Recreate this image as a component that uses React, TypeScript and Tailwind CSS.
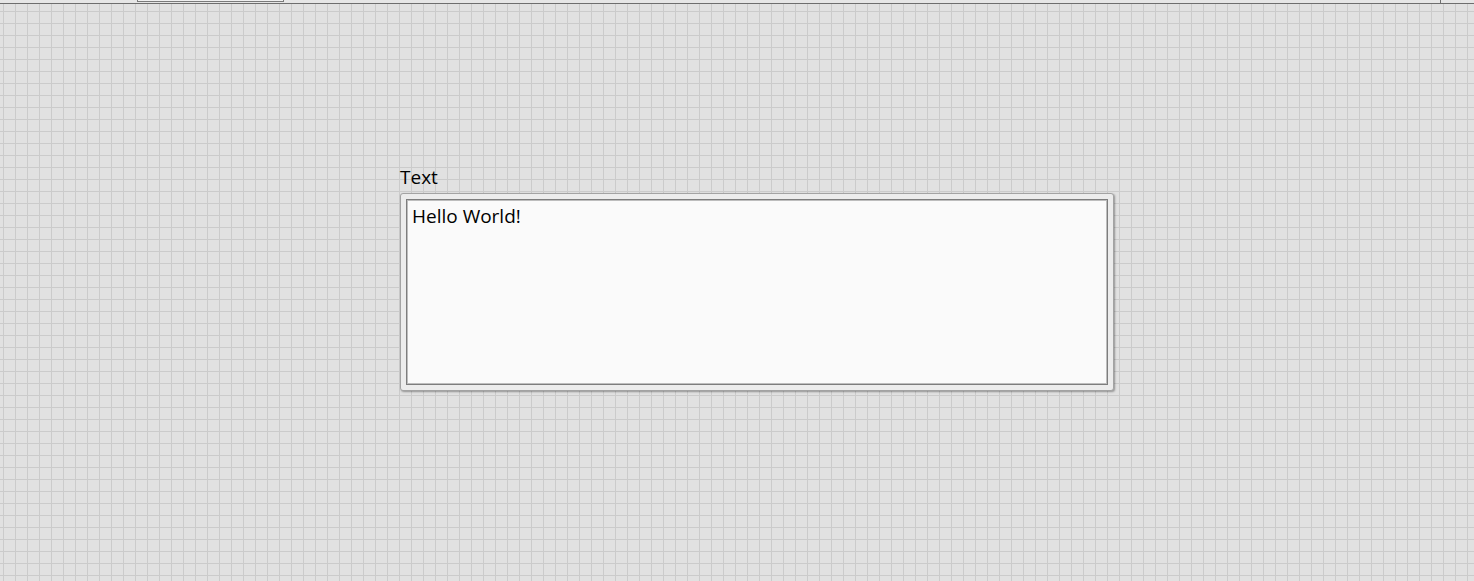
export default function App() {
  return (
    <main className="relative h-[581px] w-full overflow-hidden bg-[#e1e1e1] bg-[linear-gradient(to_right,#cbcbcb_1px,transparent_1px),linear-gradient(to_bottom,#cbcbcb_1px,transparent_1px)] bg-[size:12px_12px] bg-[position:3px_11px] font-['Open_Sans','Noto_Sans',sans-serif] text-black">
      {/* top strip of the panel window */}
      <div className="flex h-[4px] border-b border-[#6e6e6e] bg-[#e6e6e6]">
        <div className="ml-[137px] h-[2px] w-[147px] border-x border-b border-[#7a7a7a] bg-[#f0f0f0]" />
        <div className="ml-auto mr-[33px] h-full w-px bg-[#6e6e6e]" />
      </div>

      <section className="pl-[400px] pt-[160px]">
        <label className="block text-[19px] leading-[26px]">Text</label>
        <div className="mt-[3px] h-[198px] w-[714px] rounded-[3px] border border-[#a3a3a3] bg-[#ececec] p-[5px] shadow-[1px_1px_2px_rgba(0,0,0,0.35)]">
          <div className="h-full w-full border border-[#7d7d7d] bg-[#bdbdbd] p-px">
            <div className="h-full w-full bg-[#fafafa] px-[4px] pt-[2px] text-[19px] leading-[26px]">
              Hello World!
            </div>
          </div>
        </div>
      </section>
    </main>
  );
}
